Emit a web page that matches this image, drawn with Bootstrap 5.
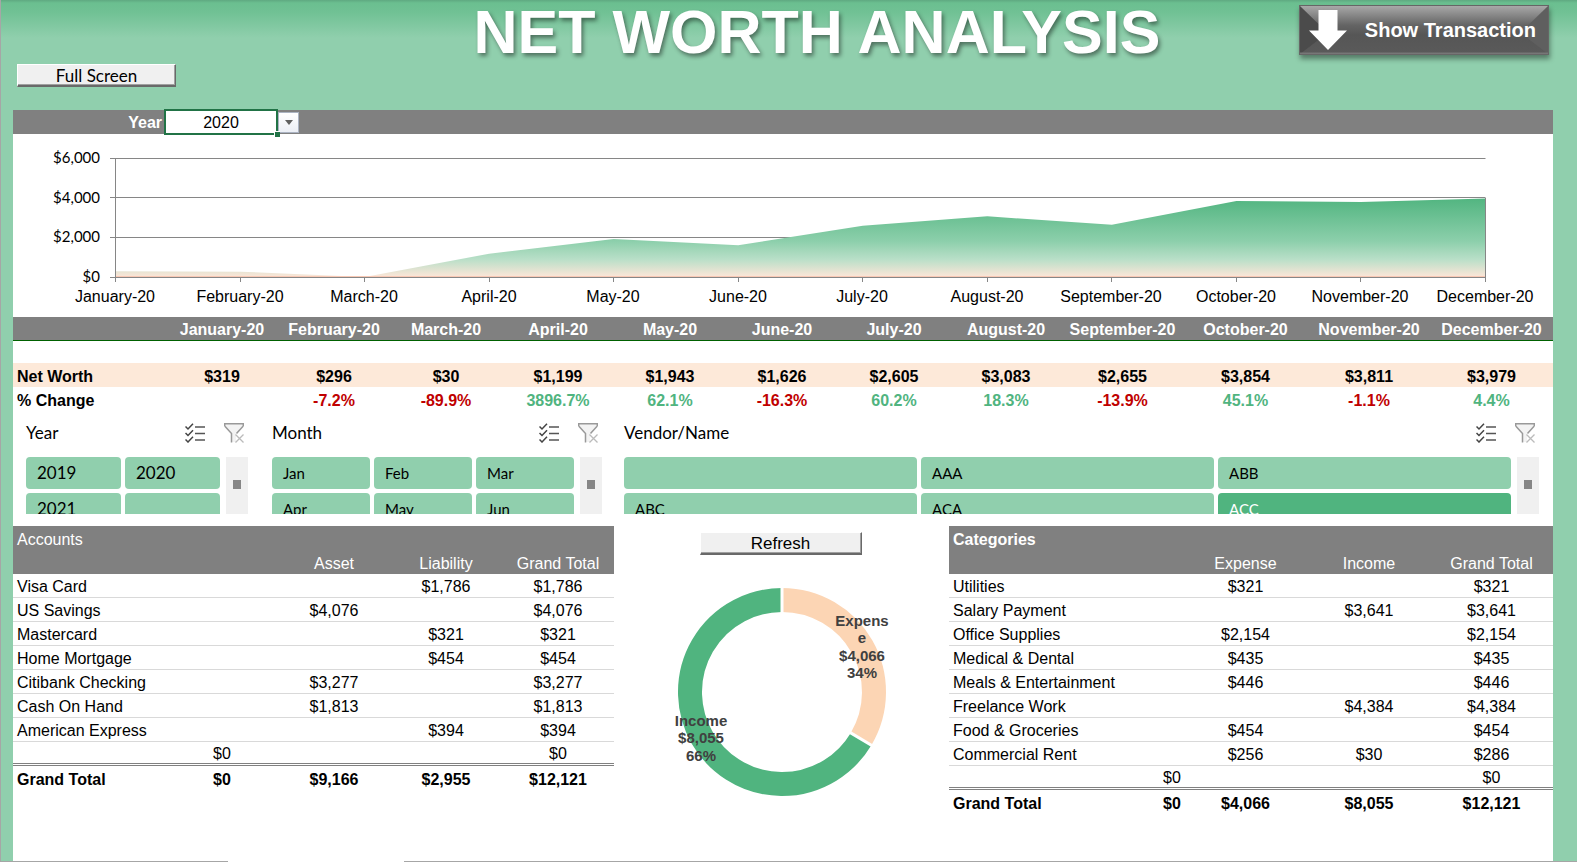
<!DOCTYPE html>
<html lang="en">
<head>
<meta charset="utf-8">
<meta name="viewport" content="width=device-width, initial-scale=1">
<title>Net Worth Analysis</title>
<link href="https://cdn.jsdelivr.net/npm/bootstrap@5.3.0/dist/css/bootstrap.min.css" rel="stylesheet">
<style>
  :root { --mint: #90cfad; --leaf: #50b47f; --bar: #808080; --peach: #fde9d9; }
  body {
    font-family: "Liberation Sans", Arial, sans-serif; font-size: 16px; line-height: 24px; color: #000;
    background: linear-gradient(#5fa981 0, #6bbf90 3px, #70c194 12px, var(--mint) 38px) var(--mint);
    border-left: 1px solid #a6a6a6;
  }
  .calibri { font-family: Lato, Carlito, sans-serif; font-size: 15px; }
  .page-head { height: 110px; display: grid; grid-template-columns: 457fr auto 389fr; padding: 0 28px 0 16px; }
  .page-head h1 { font-size: 61px; line-height: 72px; margin: -4px 0 0; font-weight: 700; color: #fff; text-shadow: 2px 3px 4px rgba(0,0,0,.45); }
  .bevel {
    height: 23px; padding: 0; line-height: 19px; background: #f0f0f0; color: #000; border-radius: 0; font-size: 17px;
    border: 1px solid #fff; border-right-color: #696969; border-bottom: 2px solid #696969;
    box-shadow: inset -1px -1px 0 #a0a0a0;
  }
  .full-screen { width: 159px; margin-top: 64px; }
  .refresh { width: 162px; }
  .show-btn {
    width: 250px; height: 50px; margin-top: 5px; padding: 0 12px 0 9px; border-radius: 0; color: #fff !important;
    font-size: 20px; font-weight: 700; position: relative; isolation: isolate; border: 1px solid #666;
    box-shadow: 1px 4px 5px rgba(0,0,0,.4);
  }
  .show-btn .face { position: absolute; inset: 0; width: 100%; height: 100%; z-index: -1; }
  .sheet { margin: 0 24px 0 12px; background: #fff; }
  .year-bar { background: var(--bar); height: 24px; }
  .year-bar label { width: 151px; padding: 2px 2px 0 0; color: #fff; font-weight: 700; text-align: right; }
  .year-cell { width: 114px; height: 26px; margin: -1px 0; position: relative; }
  .year-cell select {
    width: 100%; height: 100%; appearance: none; border: 2px solid #217346; border-radius: 0; background: #fff;
    padding: 2px 0 0; text-align: center; text-align-last: center; color: #000; line-height: 20px;
  }
  .year-cell::after { content: ""; position: absolute; right: -2px; bottom: -2px; width: 6px; height: 6px; background: #217346; border: solid #fff; border-width: 1px 0 0 1px; }
  .drop { width: 21px; height: 21px; padding: 0; border: 1px solid #abb3c2; background: linear-gradient(#fff, #eceff6); line-height: 0; }
  .area-chart { display: block; width: 100%; height: auto; font-size: 16px; }
  .sheet table { table-layout: fixed; width: 100%; margin: 0; border-collapse: separate; border-spacing: 0; }
  .sheet th, .sheet td { padding: 2px 0 0; height: 24px; line-height: 21px; text-align: center; white-space: nowrap; font-weight: inherit; }
  .sheet th[scope=row], .sheet th.lead-cell { text-align: left; padding-left: 4px; }
  .months { font-weight: 700; }
  .months thead th { background: var(--bar); color: #fff; border-bottom: 1px solid #006100; }
  .months .blank td { height: 22px; line-height: 20px; }
  .months .worth > * { background: var(--peach); }
  .neg { color: #c00000; } .pos { color: var(--leaf); }
  .slicers { display: grid; grid-template-columns: 224fr 330fr 915fr; column-gap: 22px; padding: 0 14px 0 13px; }
  .slicer-first { padding-right: 2px; }
  .slicer-head { height: 46px; padding: 0 4px 2px 0; gap: 19px; font-size: 17px; }
  .slicer-body { height: 57px; overflow: hidden; gap: 6px; }
  .tiles { display: grid; gap: 4px; grid-auto-rows: 32px; }
  .tiles-2 { grid-template-columns: repeat(2, 1fr); } .tiles-3 { grid-template-columns: repeat(3, 1fr); }
  .tiles button { border: 0; border-radius: 4px; background: var(--mint); color: #000; text-align: left; padding: 0 11px; }
  .tiles button.chosen { background: var(--leaf); color: #fff; }
  .tiles-2 button { font-size: 17px; }
  .scroll-track { width: 22px; background: #f0f0f0; padding-top: 23px; }
  .scroll-track::before { content: ""; display: block; width: 8px; height: 9px; margin: 0 auto; background: #868686; }
  .icon-btn { border: 0; padding: 0; background: none; line-height: 0; }
  .summary { display: grid; grid-template-columns: 601fr 335fr 604fr; margin-top: 12px; }
  .pivot thead th { background: var(--bar); color: #fff; }
  .pivot tbody td, .pivot tbody th { border-bottom: 1px solid #d9d9d9; }
  .pivot tbody tr:last-child > * { border-bottom: 3px double var(--bar); line-height: 19px; }
  .pivot tfoot { font-weight: 700; }
  .center-col { padding: 6px 2px 0 0; }
  .donut { width: 220px; height: 220px; margin-top: 25px; overflow: visible; font-size: 15px; font-weight: 700; fill: #404040; }
  .edge { height: 1px; background: linear-gradient(90deg, #a6a6a6 0 14.4%, #fff 14.4% 25.6%, #a6a6a6 25.6%); }
</style>
</head>
<body class="min-vh-100 d-flex flex-column">
<svg width="0" height="0" class="position-absolute" aria-hidden="true">
  <symbol id="multi" viewBox="0 0 20 20">
    <path d="M.5 3.500l2.500 2.500L8 .8M.5 10l2.500 2.500L8 7.300M.5 16.500l2.500 2.500L8 13.800" fill="none" stroke="#444" stroke-width="1.500"/>
    <path d="M10 4h10M10 10.500h10M10 17h10" stroke="#555" stroke-width="1.500"/>
  </symbol>
  <symbol id="clear" viewBox="0 0 20 20">
    <path d="M.7.800h18.600v2.200L12 10.500V19H7.500V10.500L.7 3z" fill="#f3f3f3"/>
    <path d="M19.300 3L12.500 10.500M.7 3V.800h18.600V3M.7 3L7.500 10.500V19.500" fill="none" stroke="#999" stroke-width="1.500"/>
    <path d="M11.500 11.500l8 8M19.500 11.500l-8 8" stroke="#bbb" stroke-width="1.300"/>
  </symbol>
</svg>

<header class="page-head align-items-start">
  <div><button type="button" class="btn calibri bevel full-screen">Full Screen</button></div>
  <h1>NET WORTH ANALYSIS</h1>
  <button type="button" class="btn show-btn d-flex align-items-center justify-content-between ms-auto">
    <svg class="face" viewBox="0 0 250 50" preserveAspectRatio="none" aria-hidden="true">
      <defs><linearGradient id="steel" x2="0" y2="1"><stop offset="0" stop-color="#a8a8a8"/><stop offset=".4" stop-color="#646464"/><stop offset=".6" stop-color="#565656"/><stop offset="1" stop-color="#5a5a5a"/></linearGradient></defs>
      <path fill="url(#steel)" d="M0 0h250v50H0z"/><path fill="#4b4b4b" d="M0 0l20 20v14L0 50z"/><path fill="#5f5f5f" d="M250 0l-20 20v14l20 16z"/><path fill="#777" d="M0 48.500h250V50H0z"/>
    </svg>
    <svg width="38" height="40" viewBox="0 0 38 40" aria-hidden="true"><path fill="#fff" d="M9.500 0h19v20.500H38L19 40 0 20.500h9.500z"/></svg>
    <span>Show Transaction</span>
  </button>
</header>

<main class="sheet flex-grow-1">
  <div class="year-bar d-flex align-items-center">
    <label for="year">Year</label>
    <div class="year-cell"><select id="year"><option>2020</option><option>2019</option><option>2021</option></select></div>
    <button type="button" class="drop" aria-label="Open year list"><svg width="8" height="5" viewBox="0 0 8 5"><path d="M0 0h8L4 5z" fill="#606060"/></svg></button>
  </div>

  <svg class="area-chart" viewBox="0 0 1540 183" role="img" aria-label="Net worth by month">
    <defs>
      <linearGradient id="fade" gradientUnits="userSpaceOnUse" x1="0" y1="63" x2="0" y2="143">
        <stop offset="0" stop-color="#50b47f"/><stop offset=".55" stop-color="#8ccfab"/><stop offset=".78" stop-color="#b9dfc8"/><stop offset="1" stop-color="#fde6d8"/>
      </linearGradient>
    </defs>
    <path d="M97 24.500H1472.500M97 63.500H1472.500M97 103.500H1472.500" stroke="#868686" fill="none"/>
    <path id="area" fill="url(#fade)"/>
    <path d="M102.500 142.500H1472.500" stroke="#f8c8b4"/>
    <path d="M102.500 24V148M97 143.500H1472.500M1472.500 64V148" stroke="#868686" fill="none"/>
    <path id="ticks" stroke="#868686" fill="none"/>
    <g class="calibri" text-anchor="end"><text x="87" y="29">$6,000</text><text x="87" y="69">$4,000</text><text x="87" y="108">$2,000</text><text x="87" y="148">$0</text></g>
    <g id="xlabels" text-anchor="middle"></g>
  </svg>

  <table class="months">
    <colgroup id="monthCols"></colgroup>
    <thead><tr id="mHead"><th></th></tr></thead>
    <tbody>
      <tr class="blank"><td colspan="13"></td></tr>
      <tr class="worth" id="mWorth"><th scope="row">Net Worth</th></tr>
      <tr id="mChange"><th scope="row">% Change</th></tr>
    </tbody>
  </table>

  <section class="slicers calibri">
    <div class="slicer-first">
      <div class="slicer-head d-flex align-items-center"><span class="me-auto">Year</span>
        <button class="icon-btn" aria-label="Multi-select years"><svg width="20" height="20"><use href="#multi"/></svg></button>
        <button class="icon-btn" aria-label="Clear year filter"><svg width="20" height="20"><use href="#clear"/></svg></button></div>
      <div class="slicer-body d-flex"><div class="tiles tiles-2 flex-grow-1"><button>2019</button><button>2020</button><button>2021</button><button aria-label="Blank"></button></div><div class="scroll-track"></div></div>
    </div>
    <div>
      <div class="slicer-head d-flex align-items-center"><span class="me-auto">Month</span>
        <button class="icon-btn" aria-label="Multi-select months"><svg width="20" height="20"><use href="#multi"/></svg></button>
        <button class="icon-btn" aria-label="Clear month filter"><svg width="20" height="20"><use href="#clear"/></svg></button></div>
      <div class="slicer-body d-flex"><div class="tiles tiles-3 flex-grow-1"><button>Jan</button><button>Feb</button><button>Mar</button><button>Apr</button><button>May</button><button>Jun</button></div><div class="scroll-track"></div></div>
    </div>
    <div>
      <div class="slicer-head d-flex align-items-center"><span class="me-auto">Vendor/Name</span>
        <button class="icon-btn" aria-label="Multi-select vendors"><svg width="20" height="20"><use href="#multi"/></svg></button>
        <button class="icon-btn" aria-label="Clear vendor filter"><svg width="20" height="20"><use href="#clear"/></svg></button></div>
      <div class="slicer-body d-flex"><div class="tiles tiles-3 flex-grow-1"><button aria-label="Blank"></button><button>AAA</button><button>ABB</button><button>ABC</button><button>ACA</button><button class="chosen">ACC</button></div><div class="scroll-track"></div></div>
    </div>
  </section>

  <section class="summary align-items-start">
    <table class="pivot">
      <colgroup id="accCols"></colgroup>
      <thead><tr><th class="lead-cell" colspan="5">Accounts</th></tr><tr><th></th><th></th><th>Asset</th><th>Liability</th><th>Grand Total</th></tr></thead>
      <tbody>
        <tr><th scope="row">Visa Card</th><td></td><td></td><td>$1,786</td><td>$1,786</td></tr>
        <tr><th scope="row">US Savings</th><td></td><td>$4,076</td><td></td><td>$4,076</td></tr>
        <tr><th scope="row">Mastercard</th><td></td><td></td><td>$321</td><td>$321</td></tr>
        <tr><th scope="row">Home Mortgage</th><td></td><td></td><td>$454</td><td>$454</td></tr>
        <tr><th scope="row">Citibank Checking</th><td></td><td>$3,277</td><td></td><td>$3,277</td></tr>
        <tr><th scope="row">Cash On Hand</th><td></td><td>$1,813</td><td></td><td>$1,813</td></tr>
        <tr><th scope="row">American Express</th><td></td><td></td><td>$394</td><td>$394</td></tr>
        <tr><th scope="row"></th><td>$0</td><td></td><td></td><td>$0</td></tr>
      </tbody>
      <tfoot><tr><th scope="row">Grand Total</th><td>$0</td><td>$9,166</td><td>$2,955</td><td>$12,121</td></tr></tfoot>
    </table>

    <div class="center-col d-flex flex-column align-items-center">
      <button type="button" class="btn bevel refresh">Refresh</button>
      <svg class="donut" viewBox="0 0 220 220" role="img" aria-label="Income and expense shares">
        <g id="ring" fill="none" stroke-width="24"></g>
        <g text-anchor="middle">
          <text><tspan x="191" y="46">Expens</tspan><tspan x="191" y="63">e</tspan><tspan x="191" y="81">$4,066</tspan><tspan x="191" y="98">34%</tspan></text>
          <text><tspan x="30" y="146">Income</tspan><tspan x="30" y="163">$8,055</tspan><tspan x="30" y="181">66%</tspan></text>
        </g>
      </svg>
    </div>

    <table class="pivot">
      <colgroup id="catCols"></colgroup>
      <thead><tr><th class="lead-cell fw-bold" colspan="5">Categories</th></tr><tr><th></th><th></th><th>Expense</th><th>Income</th><th>Grand Total</th></tr></thead>
      <tbody>
        <tr><th scope="row">Utilities</th><td></td><td>$321</td><td></td><td>$321</td></tr>
        <tr><th scope="row">Salary Payment</th><td></td><td></td><td>$3,641</td><td>$3,641</td></tr>
        <tr><th scope="row">Office Supplies</th><td></td><td>$2,154</td><td></td><td>$2,154</td></tr>
        <tr><th scope="row">Medical &amp; Dental</th><td></td><td>$435</td><td></td><td>$435</td></tr>
        <tr><th scope="row">Meals &amp; Entertainment</th><td></td><td>$446</td><td></td><td>$446</td></tr>
        <tr><th scope="row">Freelance Work</th><td></td><td></td><td>$4,384</td><td>$4,384</td></tr>
        <tr><th scope="row">Food &amp; Groceries</th><td></td><td>$454</td><td></td><td>$454</td></tr>
        <tr><th scope="row">Commercial Rent</th><td></td><td>$256</td><td>$30</td><td>$286</td></tr>
        <tr><th scope="row"></th><td>$0</td><td></td><td></td><td>$0</td></tr>
      </tbody>
      <tfoot><tr><th scope="row">Grand Total</th><td>$0</td><td>$4,066</td><td>$8,055</td><td>$12,121</td></tr></tfoot>
    </table>
  </section>
</main>
<div class="edge"></div>

<script src="https://cdn.jsdelivr.net/npm/bootstrap@5.3.0/dist/js/bootstrap.bundle.min.js"></script>
<script>
  const months = ['January','February','March','April','May','June','July','August','September','October','November','December'];
  const worth = [319,296,30,1199,1943,1626,2605,3083,2655,3854,3811,3979];
  const change = ['','-7.2%','-89.9%','3896.7%','62.1%','-16.3%','60.2%','18.3%','-13.9%','45.1%','-1.1%','4.4%'];
  const $ = id => document.getElementById(id);

  // Column widths are shares of the table they belong to.
  function cols(id, parts) {
    const total = parts.reduce((a, b) => a + b);
    $(id).innerHTML = parts.map(p => `<col style="width:${100 * p / total}%">`).join('');
  }
  cols('monthCols', [153,112,112,112,112,112,112,112,112,121,125,122,123]);
  cols('accCols', [153,112,112,112,112]);
  cols('catCols', [212,22,125,122,123]);

  months.forEach((m, i) => {
    $('mHead').insertAdjacentHTML('beforeend', `<th scope="col">${m}-20</th>`);
    $('mWorth').insertAdjacentHTML('beforeend', `<td>$${worth[i].toLocaleString('en-US')}</td>`);
    $('mChange').insertAdjacentHTML('beforeend', `<td class="${change[i][0] === '-' ? 'neg' : 'pos'}">${change[i]}</td>`);
  });

  // Area chart: $6,000 spans 119 units above the baseline.
  const px = i => 102.5 + i * 1370 / 11, py = v => 143.5 - v * 119 / 6000;
  $('area').setAttribute('d', `M${px(0)} 143.500L` + worth.map((v, i) => `${px(i)} ${py(v)}`).join('L') + `L${px(11)} 143.500Z`);
  $('ticks').setAttribute('d', worth.map((v, i) => `M${Math.floor(px(i)) + .5} 143V148`).join(''));
  $('xlabels').innerHTML = months.map((m, i) => `<text x="${Math.floor(px(i))}" y="168">${m}-20</text>`).join('');

  // Donut: expense runs clockwise from the top, income fills the rest.
  const at = (r, a) => [111 + r * Math.sin(a), 112 - r * Math.cos(a)].join(' ');
  const cut = 2 * Math.PI * 4066 / 12121;
  $('ring').innerHTML =
    `<path stroke="#fcd5b4" d="M${at(92,0)}A92 92 0 0 1 ${at(92,cut)}"/>` +
    `<path stroke="#50b47f" d="M${at(92,cut)}A92 92 0 1 1 ${at(92,0)}"/>` +
    `<path stroke="#fff" stroke-width="3" d="M${at(79,0)}L${at(106,0)}M${at(79,cut)}L${at(106,cut)}"/>`;
</script>
</body>
</html>
